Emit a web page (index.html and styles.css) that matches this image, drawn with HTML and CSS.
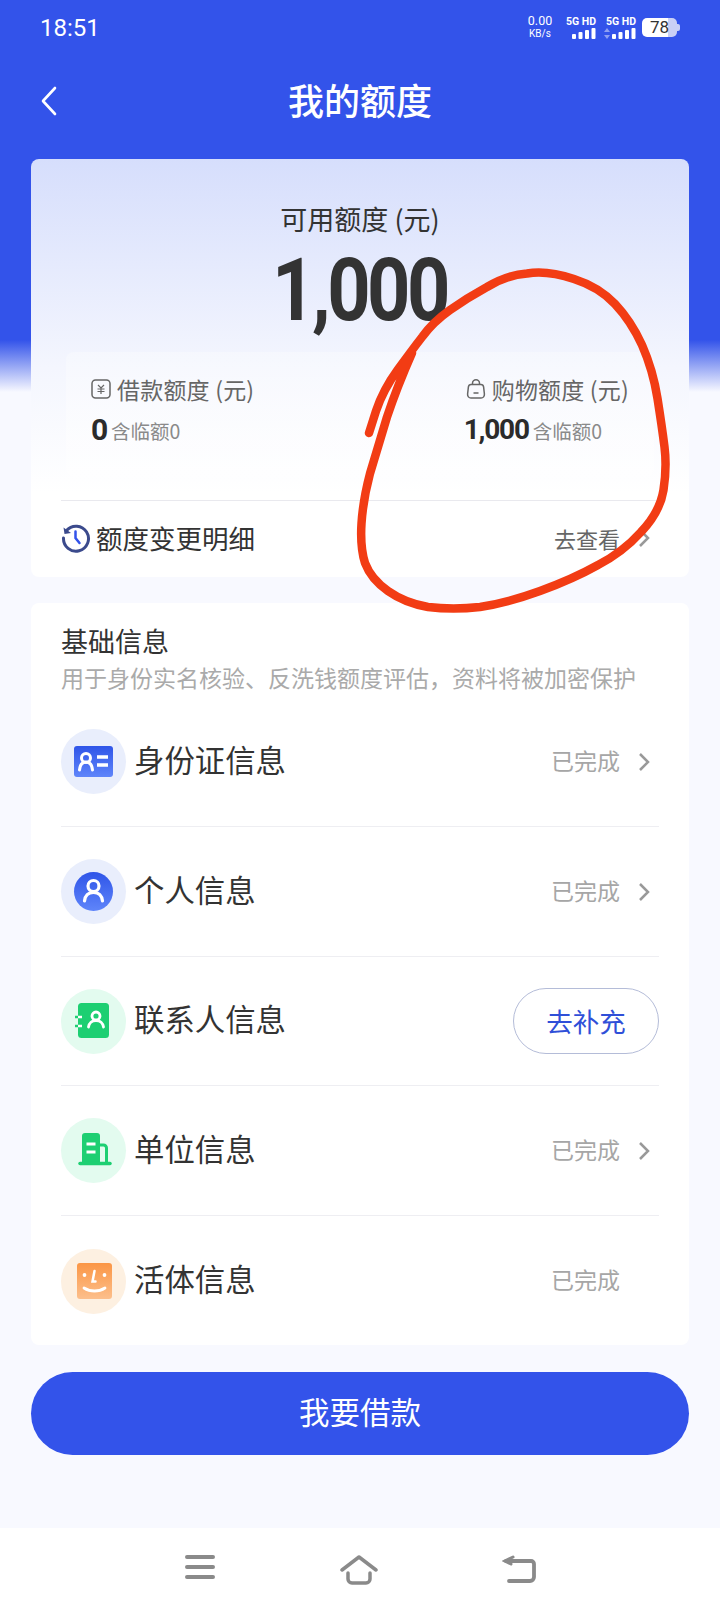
FILE: index.html
```html
<!DOCTYPE html>
<html lang="zh-CN">
<head>
<meta charset="utf-8">
<title>我的额度</title>
<link rel="stylesheet" href="styles.css">
</head>
<body>
<div class="page">
  <header class="status">
    <span class="time">18:51</span>
    <div class="status-right">
      <div class="speed"><span>0.00</span><span class="unit">KB/s</span></div>
      <div class="sim"><span>5G HD</span>
        <svg width="24" height="11" viewBox="0 0 24 11"><g fill="#fff"><rect x="0" y="6" width="4" height="5" rx="1"/><rect x="6.500" y="4" width="4" height="7" rx="1"/><rect x="13" y="2" width="4" height="9" rx="1"/><rect x="19.500" y="0" width="4" height="11" rx="1"/></g></svg>
      </div>
      <div class="sim sim-second"><span>5G HD</span>
        <svg width="32" height="11" viewBox="0 0 32 11"><g fill="#8fa0f2"><path d="M3 0l3 4H0zM3 11L0 7h6z"/></g><g fill="#fff"><rect x="8" y="6" width="4" height="5" rx="1"/><rect x="14.500" y="4" width="4" height="7" rx="1"/><rect x="21" y="2" width="4" height="9" rx="1"/><rect x="27.500" y="0" width="4" height="11" rx="1"/></g></svg>
      </div>
      <div class="battery"><span class="battery-num">78</span><i class="battery-cap"></i></div>
    </div>
  </header>

  <nav class="titlebar">
    <svg class="back" width="18" height="30" viewBox="0 0 18 30"><path d="M15 2L3 15l12 13" fill="none" stroke="#fff" stroke-width="2.600" stroke-linecap="round" stroke-linejoin="round"/></svg>
    <h1 class="title">我的额度</h1>
  </nav>

  <section class="card quota">
    <div class="quota-label">可用额度 (元)</div>
    <div class="quota-num">1,000</div>
    <div class="sub">
      <div class="sub-col">
        <div class="sub-label">
          <svg width="20" height="20" viewBox="0 0 20 20"><rect x="1" y="1" width="18" height="18" rx="3.500" fill="none" stroke="#666" stroke-width="1.500"/><path d="M7 6l3 3 3-3M6.500 10h7M6.500 12.500h7M10 9v6" fill="none" stroke="#666" stroke-width="1.200"/></svg>
          <span>借款额度 (元)</span>
        </div>
        <div class="sub-val"><b class="val-big">0</b><span class="val-note">含临额0</span></div>
      </div>
      <div class="sub-col sub-col-right">
        <div class="sub-label">
          <svg width="20" height="20" viewBox="0 0 20 20"><path d="M5 5.500h10c1.500 0 2.400 1 2.600 2.300l.8 7.200c.2 2.300-1.200 4-3.400 4H5c-2.200 0-3.600-1.700-3.400-4l.8-7.200C2.600 6.500 3.500 5.500 5 5.500z" fill="none" stroke="#666" stroke-width="1.500"/><path d="M6.500 5.500V4.300a3.500 3.500 0 0 1 7 0v1.200M7.500 14h5" fill="none" stroke="#666" stroke-width="1.500"/></svg>
          <span>购物额度 (元)</span>
        </div>
        <div class="sub-val"><b class="val-mid">1,000</b><span class="val-note">含临额0</span></div>
      </div>
    </div>
    <div class="detail">
      <svg width="30" height="30" viewBox="0 0 30 30"><path d="M5.500 7.500A12.500 12.500 0 1 1 2.500 15" fill="none" stroke="#3b4a8c" stroke-width="3" stroke-linecap="round"/><path d="M2.500 4.500l1 6.500 6.500-1z" fill="#3b4a8c"/><path d="M14.500 8.500V15l4 5" fill="none" stroke="#3353ea" stroke-width="2.500" stroke-linecap="round"/></svg>
      <span class="detail-text">额度变更明细</span>
      <span class="detail-link">去查看</span>
      <svg class="chev" width="12" height="20" viewBox="0 0 12 20"><path d="M2 2l8 8-8 8" fill="none" stroke="#999" stroke-width="2.500"/></svg>
    </div>
  </section>

  <section class="card basics">
    <h2 class="basics-title">基础信息</h2>
    <p class="basics-sub">用于身份实名核验、反洗钱额度评估，资料将被加密保护</p>
    <ul class="rows">
      <li class="row">
        <span class="badge badge-blue">
          <svg width="65" height="65" viewBox="0 0 65 65"><defs><linearGradient id="gb" x1="0" y1="0" x2="0" y2="1"><stop offset="0" stop-color="#2f55e8"/><stop offset="1" stop-color="#5f85fa"/></linearGradient></defs><rect x="13" y="17" width="39" height="31" rx="3" fill="url(#gb)"/><circle cx="25" cy="29" r="4.500" fill="none" stroke="#fff" stroke-width="3"/><path d="M18.500 41c.5-5 3-8 6.500-8s6 3 6.500 8" fill="none" stroke="#fff" stroke-width="3" stroke-linecap="round"/><path d="M36 28h11M36 36h11" stroke="#fff" stroke-width="3.500"/></svg>
        </span>
        <span class="row-name">身份证信息</span>
        <span class="row-state">已完成</span>
        <svg class="chev" width="12" height="20" viewBox="0 0 12 20"><path d="M2 2l8 8-8 8" fill="none" stroke="#999" stroke-width="2.500"/></svg>
      </li>
      <li class="row">
        <span class="badge badge-blue">
          <svg width="65" height="65" viewBox="0 0 65 65"><circle cx="32.500" cy="32.500" r="19.500" fill="url(#gb)"/><circle cx="32.500" cy="27" r="5.500" fill="none" stroke="#fff" stroke-width="3.200"/><path d="M23.500 42c.6-5.500 4-8.500 9-8.500s8.400 3 9 8.500" fill="none" stroke="#fff" stroke-width="3.200" stroke-linecap="round"/></svg>
        </span>
        <span class="row-name">个人信息</span>
        <span class="row-state">已完成</span>
        <svg class="chev" width="12" height="20" viewBox="0 0 12 20"><path d="M2 2l8 8-8 8" fill="none" stroke="#999" stroke-width="2.500"/></svg>
      </li>
      <li class="row row-short">
        <span class="badge badge-green">
          <svg width="65" height="65" viewBox="0 0 65 65"><rect x="17" y="14" width="31" height="35" rx="3.500" fill="#1dcf72"/><path d="M14 28h3M14 37h3" stroke="#1dcf72" stroke-width="2.500"/><path d="M17 28h4M17 37h4" stroke="#fff" stroke-width="2.500"/><circle cx="35" cy="27" r="4" fill="none" stroke="#fff" stroke-width="2.800"/><path d="M27.500 38c.5-4 3.500-6.500 7.500-6.500s7 2.500 7.500 6.500" fill="none" stroke="#fff" stroke-width="2.800" stroke-linecap="round"/></svg>
        </span>
        <span class="row-name">联系人信息</span>
        <button class="fill-btn">去补充</button>
      </li>
      <li class="row">
        <span class="badge badge-green">
          <svg width="65" height="65" viewBox="0 0 65 65"><path d="M21 18a3 3 0 0 1 3-3h12a3 3 0 0 1 3 3v27H21z" fill="#1dcf72"/><path d="M39 27h3.500a3 3 0 0 1 3 3v15" fill="none" stroke="#1dcf72" stroke-width="3"/><path d="M19 45.500h30" stroke="#1dcf72" stroke-width="3.500" stroke-linecap="round"/><path d="M25.500 26h9M25.500 34h9" stroke="#fff" stroke-width="3"/></svg>
        </span>
        <span class="row-name">单位信息</span>
        <span class="row-state">已完成</span>
        <svg class="chev" width="12" height="20" viewBox="0 0 12 20"><path d="M2 2l8 8-8 8" fill="none" stroke="#999" stroke-width="2.500"/></svg>
      </li>
      <li class="row row-last">
        <span class="badge badge-orange">
          <svg width="65" height="65" viewBox="0 0 65 65"><defs><linearGradient id="go" x1="0" y1="0" x2="0" y2="1"><stop offset="0" stop-color="#fb9645"/><stop offset="1" stop-color="#fcbf8c"/></linearGradient></defs><rect x="16" y="14" width="35" height="36" rx="3" fill="url(#go)"/><circle cx="23.500" cy="26" r="1.900" fill="#fff"/><circle cx="43.500" cy="26" r="1.900" fill="#fff"/><path d="M33.500 22l-2 10.500h3" fill="none" stroke="#fff" stroke-width="2.500" stroke-linecap="round"/><path d="M23 39c6 4 15 4 21 0" fill="none" stroke="#fff" stroke-width="2.800" stroke-linecap="round"/></svg>
        </span>
        <span class="row-name">活体信息</span>
        <span class="row-state row-state-end">已完成</span>
      </li>
    </ul>
  </section>

  <button class="borrow">我要借款</button>

  <footer class="navbar">
    <svg width="30" height="24" viewBox="0 0 30 24"><path d="M2 2h26M2 12h26M2 22h26" stroke="#8a8a8a" stroke-width="4" stroke-linecap="round"/></svg>
    <svg width="38" height="30" viewBox="0 0 38 30"><path d="M2 15L19 2l17 13" fill="none" stroke="#8a8a8a" stroke-width="3.500" stroke-linecap="round" stroke-linejoin="round"/><path d="M8 18v6a4 4 0 0 0 4 4h14a4 4 0 0 0 4-4v-6" fill="none" stroke="#8a8a8a" stroke-width="3.500" stroke-linecap="round"/></svg>
    <svg width="34" height="28" viewBox="0 0 34 28"><path d="M7 26h21a4 4 0 0 0 4-4V9a3 3 0 0 0-3-3H4" fill="none" stroke="#8a8a8a" stroke-width="3.800" stroke-linecap="round"/><path d="M11 2L3 6l6 3" fill="none" stroke="#8a8a8a" stroke-width="3" stroke-linecap="round"/></svg>
  </footer>

  <svg class="scribble" width="720" height="1612" viewBox="0 0 720 1612"><path d="M369 433L376 411Q383 390 397.500 370Q412 350 422.500 336.500Q433 322 450 310Q467 298 487 287Q507 275 527 273.500Q547 270 574 279Q599 287 615 304Q631 321 642 345Q653 370 657.500 398.500Q662 427 664.500 447Q667 467 663.500 490Q660 512 641 532Q623 552 598 565Q573 579 540 591Q507 603 480 607Q453 610 428 607Q405 603 388 591Q371 579 365 563Q360 547 361.500 523.500Q363 500 370 473.500Q378 447 387 417Q397 387 412 353" fill="none" stroke="#f23c14" stroke-width="8.500" stroke-linecap="round" stroke-linejoin="round"/></svg>
</div>
</body>
</html>
```
FILE: styles.css
```css
* { box-sizing: border-box; margin: 0; padding: 0; }
html, body { width: 720px; height: 1612px; overflow: hidden; }
body { font-family: "Noto Sans CJK SC", "Noto Sans", sans-serif; color: #333; }
.page {
  position: relative;
  width: 720px;
  height: 1612px;
  display: flex;
  flex-direction: column;
  background: linear-gradient(#3353ea 0, #3353ea 340px, #f8f9ff 392px);
}
.status {
  height: 56px;
  padding: 0 43px 0 40px;
  display: flex;
  align-items: center;
  justify-content: space-between;
  color: #fff;
}
.time { font: 400 24px/1 Roboto, sans-serif; }
.status-right { display: flex; align-items: flex-start; font-family: Roboto, sans-serif; }
.speed { display: flex; flex-direction: column; align-items: center; width: 28px; margin-top: -3px; font-size: 12.500px; line-height: 15px; }
.speed .unit { font-size: 10px; line-height: 12px; }
.sim { display: flex; flex-direction: column; align-items: flex-end; margin-left: 9px; width: 33px; font-size: 10.500px; font-weight: 700; line-height: 11px; }
.sim-second { margin-left: 7px; }
.sim svg { margin-top: 1px; display: block; }
.battery { position: relative; margin-left: 6px; margin-top: 2px; width: 35px; height: 19px; border-radius: 5px; background: linear-gradient(90deg, #fff 74%, #c9d0f6 74%); color: #333; font: 400 17px/19px Roboto, sans-serif; text-align: center; }
.battery-cap { position: absolute; right: -3px; top: 6px; width: 3px; height: 7px; border-radius: 0 2px 2px 0; background: #c9d0f6; }
.titlebar { height: 103px; padding: 0 0 18px; position: relative; display: flex; align-items: center; justify-content: center; }
.back { position: absolute; left: 40px; top: 30px; }
.title { font-size: 36px; font-weight: 500; line-height: 1; color: #fff; }
.card { margin: 0 31px; width: 658px; border-radius: 8px; background: #fff; }
.quota { height: 418px; padding-top: 42px; display: flex; flex-direction: column; align-items: center; background: linear-gradient(#d6defc 0, #f4f6fe 50%, #fff 80%); }
.quota-label { font-size: 27px; line-height: 36px; color: #333; }
.quota-num { margin-top: 7px; font: 700 87px/92px Roboto, sans-serif; letter-spacing: -4px; color: #333; transform: scaleX(.87); }
.sub { margin-top: 16px; width: 588px; height: 125px; border-radius: 8px; padding: 21px 26px 0 25px; display: flex; justify-content: space-between; background: linear-gradient(rgba(255,255,255,.28), rgba(255,255,255,.45)); }
.sub-col-right { margin-right: -1px; }
.sub-label { display: flex; align-items: center; gap: 6px; font-size: 23px; letter-spacing: .2px; line-height: 32px; color: #666; }
.sub-val { display: flex; align-items: center; margin-top: 6px; height: 38px; }
.val-big { font: 700 30px/1 Roboto, sans-serif; color: #2b2b2b; width: 20px; }
.val-mid { margin-left: -2px; margin-right: 4px; font: 700 28px/1 Roboto, sans-serif; letter-spacing: -1.200px; color: #2b2b2b; }
.val-note { font-size: 19.500px; color: #8a8a8a; }
.detail { margin-top: 23px; width: 598px; height: 74px; padding-right: 9px; border-top: 1px solid #e9e9ee; display: flex; align-items: center; }
.detail-text { margin-left: 5px; flex: 1; font-size: 26.500px; color: #333; }
.detail-link { font-size: 22px; color: #666; margin-right: 18px; }
.chev { flex: none; }
.basics { margin-top: 26px; height: 742px; padding: 20px 30px 0; }
.basics-title { font-size: 27px; font-weight: 400; line-height: 36px; color: #333; }
.basics-sub { font-size: 23px; line-height: 36px; white-space: nowrap; color: #aaa; }
.rows { list-style: none; margin-top: 2px; }
.row { height: 130px; padding-right: 9px; display: flex; align-items: center; border-bottom: 1px solid #eeeef2; }
.row-short { height: 129px; }
.row-last { border-bottom: 0; }
.badge { flex: none; width: 65px; height: 65px; border-radius: 50%; display: block; }
.badge svg { display: block; }
.badge-blue { background: #e9eefc; }
.badge-green { background: #e3fbef; }
.badge-orange { background: #fdf0e1; }
.row-name { flex: 1; margin-left: 8px; margin-bottom: 6px; font-size: 30.400px; color: #333; }
.row-state { font-size: 23px; color: #a6a6a6; margin-right: 18px; margin-bottom: 4px; }
.row-state-end { margin-right: 30px; }
.fill-btn { margin-right: -9px; width: 146px; height: 66px; border: 1px solid #b4bcd8; border-radius: 33px; background: #fff; color: #2f4fd8; font: 400 26.500px/1 "Noto Sans CJK SC", sans-serif; }
.borrow { margin: 27px 31px 0; width: 658px; height: 83px; padding-bottom: 5px; border: 0; border-radius: 42px; background: #3353ea; color: #fff; font: 400 30.500px/1 "Noto Sans CJK SC", sans-serif; }
.navbar { position: relative; margin-top: 73px; flex: 1; background: #fff; padding: 27px 184px 0 185px; display: flex; align-items: flex-start; justify-content: space-between; }
.scribble { position: absolute; left: 0; top: 0; pointer-events: none; }
```
